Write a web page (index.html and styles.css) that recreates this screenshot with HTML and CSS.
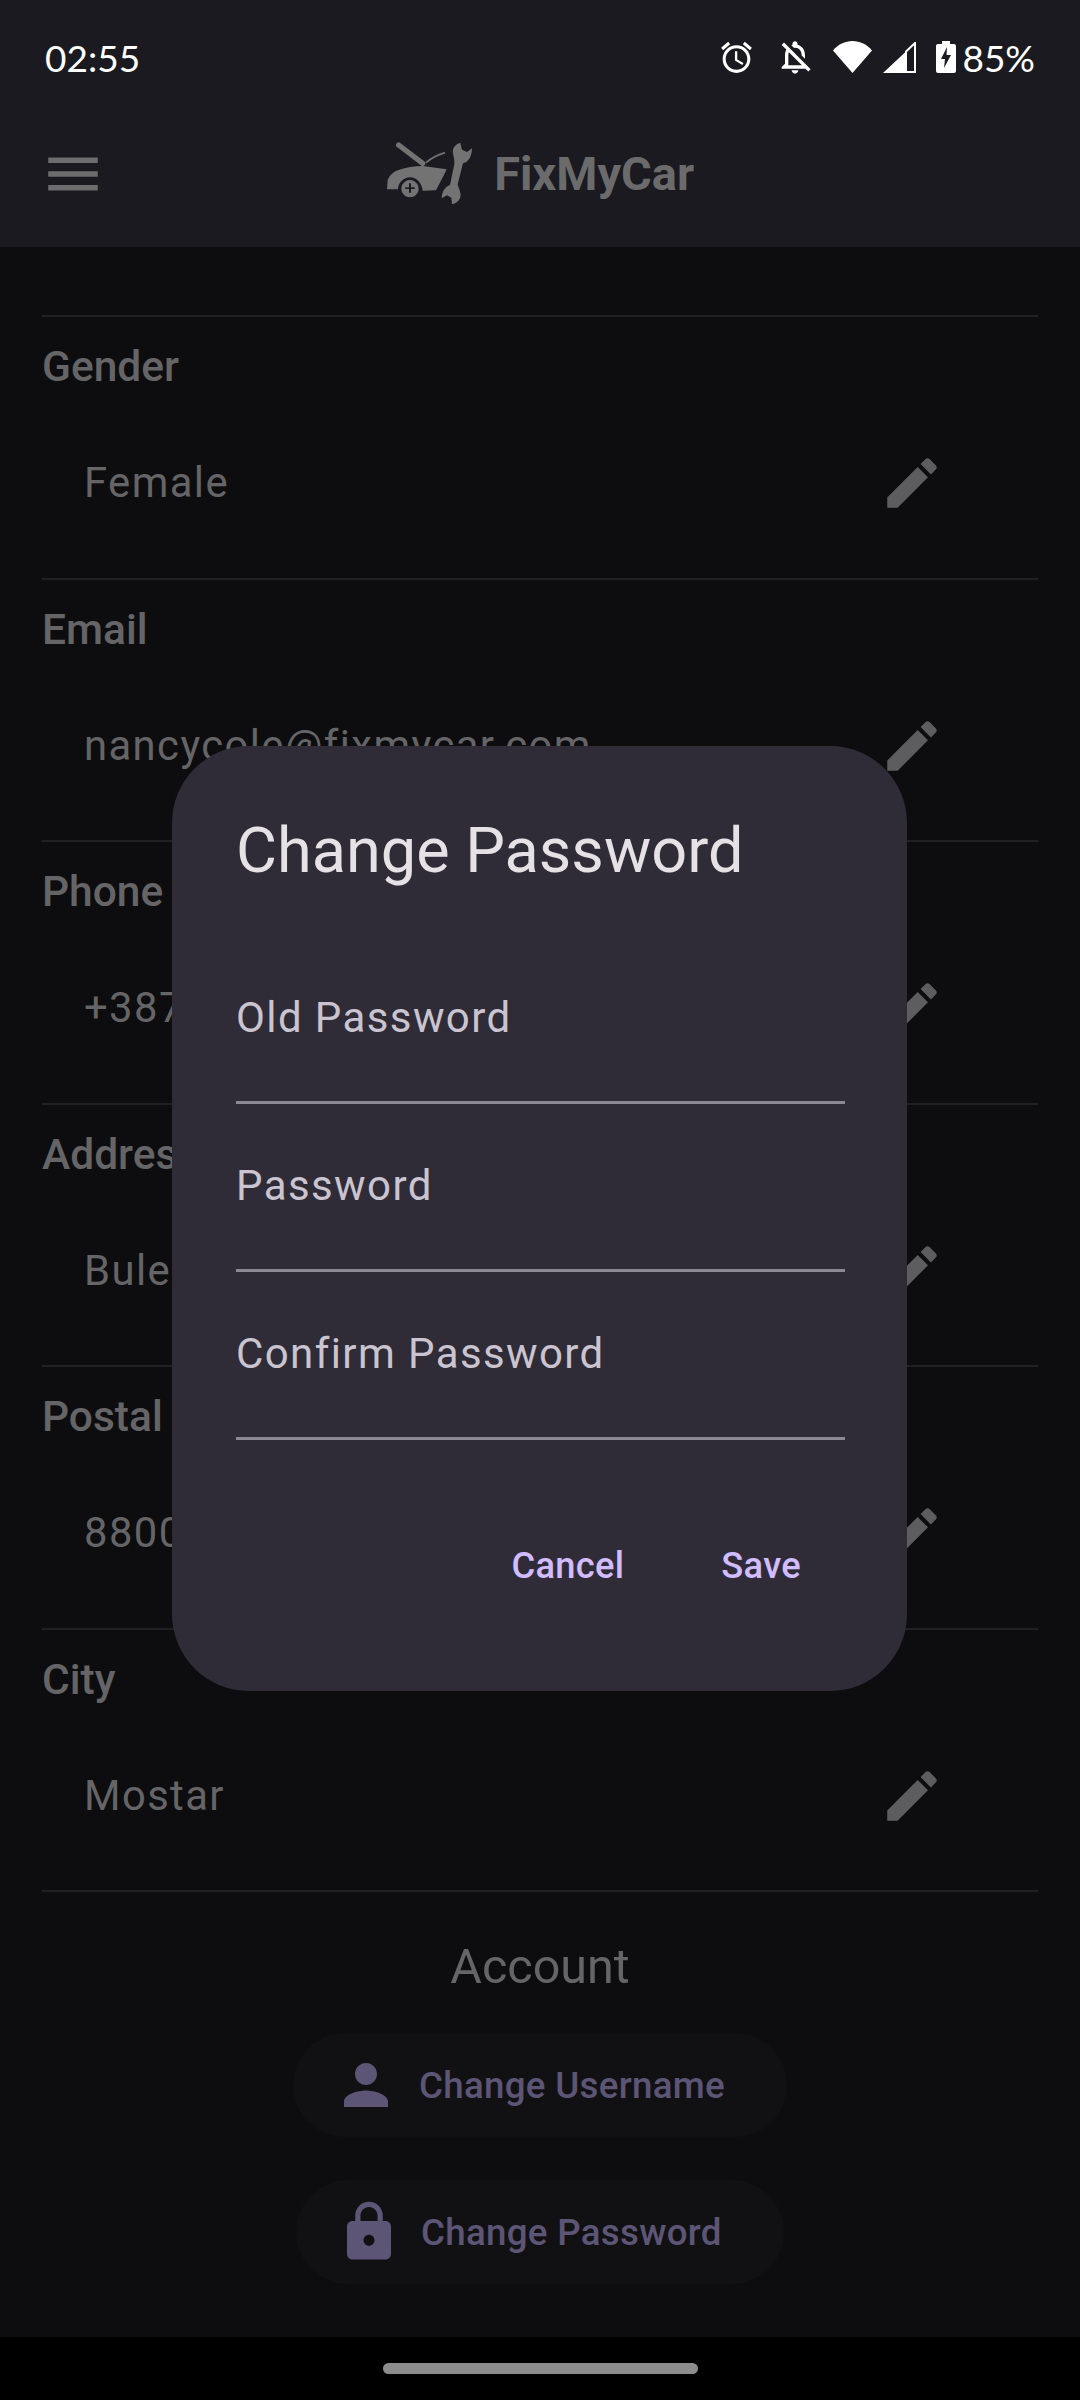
FILE: index.html
```html
<!DOCTYPE html>
<html lang="en">
<head>
<meta charset="utf-8">
<title>FixMyCar</title>
<link rel="stylesheet" href="styles.css">
</head>
<body>
<div class="screen">
  <header class="top">
    <div class="status">
      <span class="time">02:55</span>
      <div class="status-right">
        <svg class="ic-alarm" viewBox="0 0 24 24"><path d="M22 5.720l-4.600-3.860-1.290 1.530 4.600 3.860L22 5.720zM7.880 3.390L6.600 1.860 2 5.710l1.290 1.530 4.590-3.850zM12.500 8H11v6l4.750 2.850.75-1.230-4-2.370V8zM12 4c-4.970 0-9 4.030-9 9s4.020 9 9 9c4.970 0 9-4.030 9-9s-4.030-9-9-9zm0 16c-3.870 0-7-3.130-7-7s3.130-7 7-7 7 3.130 7 7-3.130 7-7 7z"/></svg>
        <svg class="ic-bell" viewBox="0 0 24 24"><path d="M12 22c1.100 0 2-.9 2-2h-4c0 1.100.9 2 2 2zm0-15.500c2.490 0 4 2.020 4 4.500v.1l2 2V11c0-3.070-1.630-5.640-4.500-6.320V4c0-.83-.67-1.500-1.500-1.500s-1.500.67-1.500 1.500v.68c-.24.06-.47.15-.69.23l1.640 1.640c.18-.02.36-.05.55-.05zM5.410 3.350L4 4.760l2.810 2.810C6.290 8.570 6 9.740 6 11v5l-2 2v1h14.240l1.740 1.740 1.410-1.410L5.410 3.350zM16 17H8v-6c0-.68.12-1.320.34-1.900L16 16.760V17z"/></svg>
        <svg class="ic-wifi" viewBox="0 0 39 32"><path d="M0 9.500C5 3.500 12 0 19.500 0S34 3.500 39 9.500L19.500 32z"/></svg>
        <svg class="ic-signal" viewBox="0 0 33 31"><path d="M0 31L23 9.500V31z"/><path class="sig-outline" d="M23 9.500L32 1v29H23z"/></svg>
        <svg class="ic-battery" viewBox="0 0 20 32"><path fill-rule="evenodd" d="M6 0h8v3h4c1.100 0 2 .9 2 2v25c0 1.100-.9 2-2 2H2c-1.100 0-2-.9-2-2V5c0-1.100.9-2 2-2h4zM11 6L5 18h4l-1 9 7-13h-4.500z"/></svg>
        <span class="pct">85%</span>
      </div>
    </div>
    <div class="appbar">
      <svg class="menu" viewBox="0 0 24 24"><path d="M3 18h18v-2H3v2zm0-5h18v-2H3v2zm0-7v2h18V6H3z"/></svg>
      <div class="brand">
        <svg class="logo" viewBox="80 60 265 200">
          <path d="M83 208L85 180C92 165 100 156 118 150C140 142 165 138 190 138L262 148C252 170 240 192 230 211L190 212C188 190 172 172 152 172C132 172 116 190 116 208z"/>
          <path class="logo-stroke" d="M118 75L190 130"/>
          <path class="logo-thin" d="M200 128C215 115 235 105 257 98"/>
          <path fill-rule="evenodd" d="M152 180a26 26 0 1 1-.1 0zM149 190v12h-11v5h11v11h6v-11h11v-5h-11v-12z"/>
          <path d="M303 68C288 72 278 85 281 100C283 112 286 120 285 132L272 195C258 200 247 215 247 235L263 226L276 233L278 252C295 250 307 235 303 218C301 208 296 200 295 193L311 130C325 128 338 112 338 85L323 96L308 89z"/>
        </svg>
        <span class="brand-name">FixMyCar</span>
      </div>
    </div>
  </header>

  <main class="content">
    <section class="row">
      <h3 class="label">Gender</h3>
      <div class="value-row"><span class="value">Female</span><svg class="edit" viewBox="0 0 24 24"><path d="M3 17.250V21h3.750L17.810 9.940l-3.750-3.750L3 17.250zM20.710 7.040c.39-.39.39-1.020 0-1.410l-2.340-2.340c-.39-.39-1.020-.39-1.410 0l-1.830 1.830 3.750 3.750 1.830-1.830z"/></svg></div>
    </section>
    <section class="row">
      <h3 class="label">Email</h3>
      <div class="value-row"><span class="value">nancycole@fixmycar.com</span><svg class="edit" viewBox="0 0 24 24"><path d="M3 17.250V21h3.750L17.810 9.940l-3.750-3.750L3 17.250zM20.710 7.040c.39-.39.39-1.020 0-1.410l-2.340-2.340c-.39-.39-1.020-.39-1.410 0l-1.830 1.830 3.750 3.750 1.830-1.830z"/></svg></div>
    </section>
    <section class="row">
      <h3 class="label">Phone</h3>
      <div class="value-row"><span class="value">+387</span><svg class="edit" viewBox="0 0 24 24"><path d="M3 17.250V21h3.750L17.810 9.940l-3.750-3.750L3 17.250zM20.710 7.040c.39-.39.39-1.020 0-1.410l-2.340-2.340c-.39-.39-1.020-.39-1.410 0l-1.830 1.830 3.750 3.750 1.830-1.830z"/></svg></div>
    </section>
    <section class="row">
      <h3 class="label">Address</h3>
      <div class="value-row"><span class="value">Bule</span><svg class="edit" viewBox="0 0 24 24"><path d="M3 17.250V21h3.750L17.810 9.940l-3.750-3.750L3 17.250zM20.710 7.040c.39-.39.39-1.020 0-1.410l-2.340-2.340c-.39-.39-1.020-.39-1.410 0l-1.830 1.830 3.750 3.750 1.830-1.830z"/></svg></div>
    </section>
    <section class="row">
      <h3 class="label">Postal Code</h3>
      <div class="value-row"><span class="value">88000</span><svg class="edit" viewBox="0 0 24 24"><path d="M3 17.250V21h3.750L17.810 9.940l-3.750-3.750L3 17.250zM20.710 7.040c.39-.39.39-1.020 0-1.410l-2.340-2.340c-.39-.39-1.020-.39-1.410 0l-1.830 1.830 3.750 3.750 1.830-1.830z"/></svg></div>
    </section>
    <section class="row row-last">
      <h3 class="label">City</h3>
      <div class="value-row"><span class="value">Mostar</span><svg class="edit" viewBox="0 0 24 24"><path d="M3 17.250V21h3.750L17.810 9.940l-3.750-3.750L3 17.250zM20.710 7.040c.39-.39.39-1.020 0-1.410l-2.340-2.340c-.39-.39-1.020-.39-1.410 0l-1.830 1.830 3.750 3.750 1.830-1.830z"/></svg></div>
    </section>
    <h2 class="account">Account</h2>
    <div class="actions">
      <button class="pill pill-user"><svg class="pill-ic" viewBox="0 0 24 24"><path d="M12 12c2.210 0 4-1.790 4-4s-1.790-4-4-4-4 1.790-4 4 1.790 4 4 4zm0 2c-2.670 0-8 1.340-8 4v2h16v-2c0-2.660-5.330-4-8-4z"/></svg><span>Change Username</span></button>
      <button class="pill pill-pass"><svg class="pill-ic" viewBox="0 0 24 24"><path d="M18 8h-1V6c0-2.760-2.240-5-5-5S7 3.240 7 6v2H6c-1.100 0-2 .9-2 2v10c0 1.100.9 2 2 2h12c1.100 0 2-.9 2-2V10c0-1.100-.9-2-2-2zm-6 9c-1.100 0-2-.9-2-2s.9-2 2-2 2 .9 2 2-.9 2-2 2zm3.100-9H8.900V6c0-1.710 1.390-3.100 3.100-3.100 1.710 0 3.100 1.390 3.100 3.100v2z"/></svg><span>Change Password</span></button>
    </div>
  </main>

  <footer class="navbar"><div class="handle"></div></footer>

  <div class="dialog">
    <h1 class="dialog-title">Change Password</h1>
    <div class="field">Old Password</div>
    <div class="field">Password</div>
    <div class="field">Confirm Password</div>
    <div class="dialog-actions">
      <span class="text-btn">Cancel</span>
      <span class="text-btn">Save</span>
    </div>
  </div>
</div>
</body>
</html>
```

FILE: styles.css
```css
* { box-sizing: border-box; }
html, body { margin: 0; padding: 0; background: #000; }
body { font-family: Roboto, "Liberation Sans", sans-serif; }
.screen { position: relative; width: 1080px; height: 2400px; display: flex; flex-direction: column; overflow: hidden; background: #0d0d0f; }

.top { height: 247px; background: #1a1a20; flex: none; }
.status { height: 110px; display: flex; justify-content: space-between; align-items: center; padding: 4px 45px 0 45px; color: #fff; font-family: Lato, sans-serif; }
.time { font-size: 37px; }
.status-right { display: flex; align-items: center; }
.status-right svg { fill: #fff; display: block; }
.ic-alarm { width: 37px; height: 37px; margin-right: 20px; }
.ic-bell { width: 40px; height: 40px; margin-right: 18px; }
.ic-wifi { width: 39px; height: 32px; margin-right: 11px; }
.ic-signal { width: 33px; height: 31px; margin-right: 20px; }
.ic-battery { width: 20px; height: 32px; margin-right: 6px; }
.sig-outline { fill: none; stroke: #fff; stroke-width: 2; }
.pct { font-size: 37px; line-height: 1; }

.appbar { height: 137px; display: grid; grid-template-columns: 1fr auto 1fr; align-items: center; padding: 0 0 10px; }
.menu { width: 66px; height: 66px; fill: #6d6d6f; display: block; margin-left: 40px; }
.brand { display: flex; align-items: center; gap: 20px; }
.logo { width: 88.330px; height: 66.670px; fill: #737373; display: block; }
.logo-stroke { fill: none; stroke: #737373; stroke-width: 16; stroke-linecap: round; }
.logo-thin { fill: none; stroke: #737373; stroke-width: 5; }
.brand-name { font-size: 47px; font-weight: 700; color: #6b6b6c; }

.content { flex: 1; min-height: 0; padding: 68px 42px 0; }
.row { height: 262.500px; border-top: 2.750px solid #212124; padding-top: 21px; }
.row-last { border-bottom: 2.750px solid #212124; height: 264.500px; }
.label { margin: 0; font-size: 42.500px; line-height: 58px; font-weight: 500; color: #656567; }
.value-row { display: flex; justify-content: space-between; align-items: center; height: 66px; margin-top: 54px; padding: 0 93px 0 42px; }
.value { font-size: 41.800px; letter-spacing: 1.400px; color: #656567; margin-top: -1px; }
.edit { width: 66px; height: 66px; fill: #5d5d60; display: block; flex: none; }

.account { margin: 40px 0 0; height: 70px; line-height: 70px; text-align: center; font-size: 48.500px; font-weight: 400; color: #656567; }
.actions { display: flex; flex-direction: column; align-items: center; gap: 43px; margin-top: 31px; }
.pill { display: flex; align-items: center; height: 104px; border: 0; border-radius: 52px; background: #111113; color: #5d5575; font-family: inherit; font-size: 36.700px; font-weight: 500; letter-spacing: .3px; padding: 0; }
.pill-user { width: 494px; padding-left: 51px; gap: 31px; }
.pill-pass { width: 488px; padding-left: 51px; gap: 30px; }
.pill-ic { width: 66px; height: 66px; fill: #5d5575; flex: none; margin-left: -11px; margin-right: -11px; }

.navbar { height: 63px; flex: none; background: #000; display: flex; justify-content: center; padding-top: 26px; }
.handle { width: 315px; height: 11px; border-radius: 6px; background: #8c8c8c; }

.dialog { position: absolute; left: 172px; top: 746px; width: 735px; height: 945px; border-radius: 77px; background: #2f2c37; padding: 66px 62px 0 64px; }
.dialog-title { margin: 0 0 46px; font-size: 63px; line-height: 78px; font-weight: 400; color: #e6e1e5; }
.field { height: 168px; padding-top: 53px; border-bottom: 3px solid #8d8993; font-size: 42px; line-height: 58px; letter-spacing: 1.400px; color: #cac4d0; }
.dialog-actions { display: flex; justify-content: flex-end; gap: 97px; padding: 95px 44px 0 0; }
.text-btn { font-size: 36.300px; line-height: 62px; font-weight: 500; letter-spacing: .3px; color: #d0bcff; }
```
